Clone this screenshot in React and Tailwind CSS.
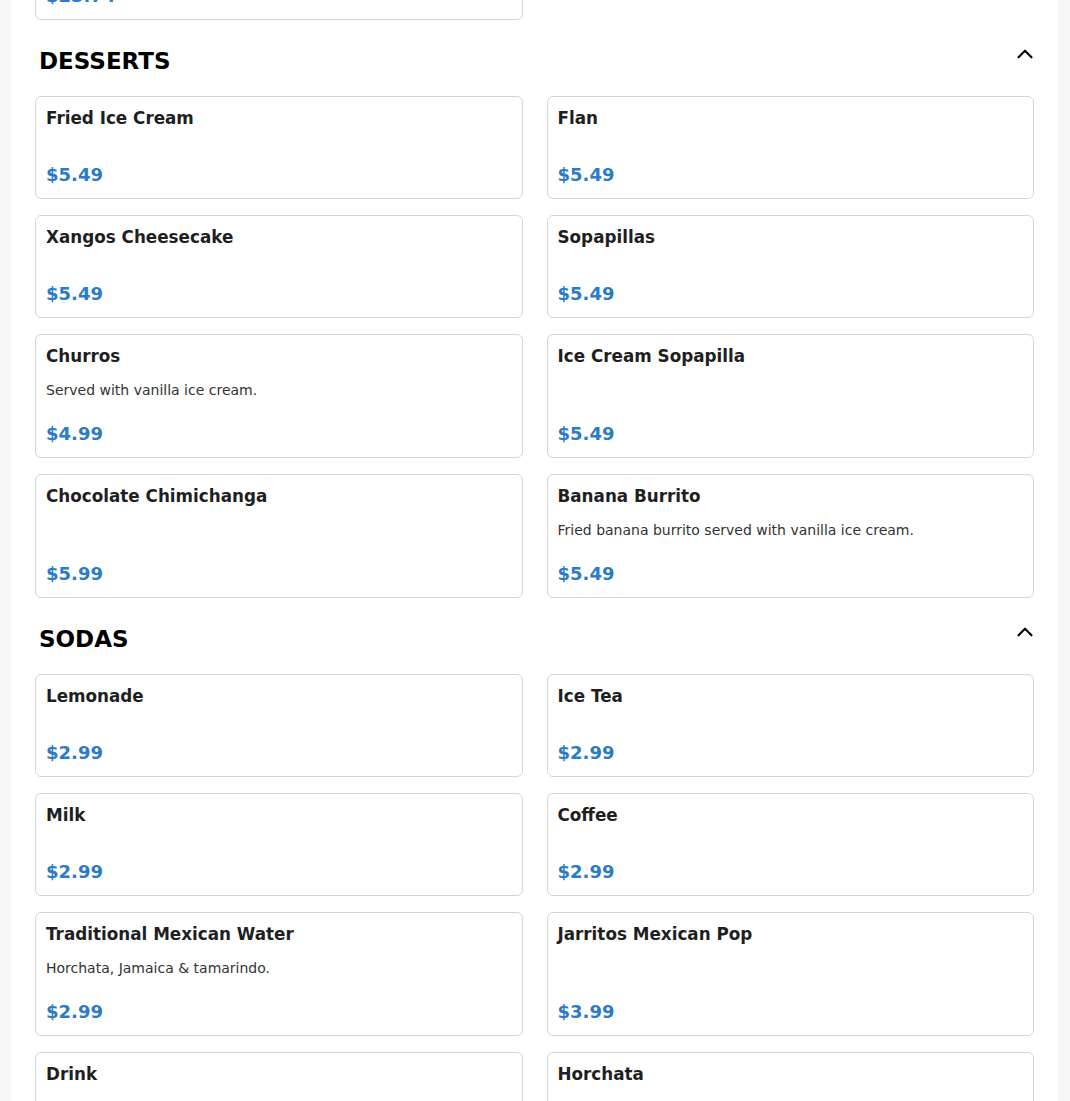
import React from "react";
import { ChevronUp } from "lucide-react";

const sections = [
  {
    name: "DESSERTS",
    items: [
      { name: "Fried Ice Cream", price: "$5.49" },
      { name: "Flan", price: "$5.49" },
      { name: "Xangos Cheesecake", price: "$5.49" },
      { name: "Sopapillas", price: "$5.49" },
      { name: "Churros", desc: "Served with vanilla ice cream.", price: "$4.99" },
      { name: "Ice Cream Sopapilla", price: "$5.49" },
      { name: "Chocolate Chimichanga", price: "$5.99" },
      {
        name: "Banana Burrito",
        desc: "Fried banana burrito served with vanilla ice cream.",
        price: "$5.49",
      },
    ],
  },
  {
    name: "SODAS",
    items: [
      { name: "Lemonade", price: "$2.99" },
      { name: "Ice Tea", price: "$2.99" },
      { name: "Milk", price: "$2.99" },
      { name: "Coffee", price: "$2.99" },
      {
        name: "Traditional Mexican Water",
        desc: "Horchata, Jamaica & tamarindo.",
        price: "$2.99",
      },
      { name: "Jarritos Mexican Pop", price: "$3.99" },
      { name: "Drink", price: "$1.99" },
      { name: "Horchata", price: "$2.99" },
    ],
  },
];

const MenuCard = ({ item }) => {
  // карточка блюда: название, описание (если есть), цена внизу
  return (
    <div className="flex flex-col rounded-md border border-[#d6d6d6] bg-white px-[10px] pt-[11px] pb-[13px]">
      <p className="text-[16.8px] font-bold leading-[21px] text-[#1f1f1f]">{item.name}</p>
      {item.desc && (
        <p className="mt-[13px] text-sm leading-[21px] text-[#333333]">{item.desc}</p>
      )}
      <p
        className={`mt-auto text-[18px] font-bold leading-[21px] text-[#2b7bc6] ${
          item.desc ? "pt-[22px]" : "pt-[35px]"
        }`}>
        {item.price}
      </p>
    </div>
  );
};

const App = () => {
  return (
    <div
      className="min-h-screen bg-[#f6f6f6]"
      style={{ fontFamily: '"DejaVu Sans", Verdana, sans-serif' }}>
      <div className="ml-[11px] h-[1101px] w-[1047px] overflow-hidden bg-white px-6">
        {/* хвост предыдущей секции, уходит за верх экрана */}
        <div className="-mt-[83px] grid grid-cols-2 gap-x-6">
          <MenuCard item={{ name: "Chimichanga Dinner", price: "$23.74" }} />
        </div>

        {sections.map((section) => (
          <div key={section.name}>
            <div className="mt-[28px] mb-[21px] flex items-start justify-between pl-1">
              <h2 className="text-[23px] font-bold leading-[27px] text-black">
                {section.name}
              </h2>
              <button className="-mt-[7px] -mr-[4px] flex h-[26px] w-[26px] items-center justify-center text-black">
                <ChevronUp size={26} strokeWidth={2} />
              </button>
            </div>
            <div className="grid grid-cols-2 gap-x-6 gap-y-4">
              {section.items.map((item) => (
                <MenuCard key={item.name} item={item} />
              ))}
            </div>
          </div>
        ))}
      </div>
    </div>
  );
};

export default App;
